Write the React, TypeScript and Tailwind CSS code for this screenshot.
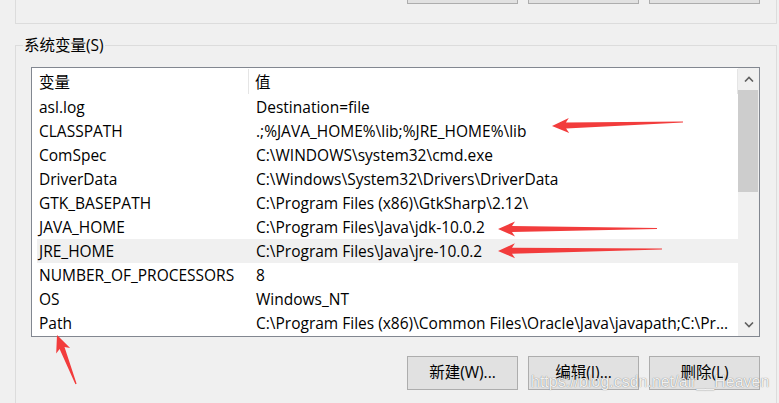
import React from 'react';

const rows: [string, string][] = [
  ['asl.log', 'Destination=file'],
  ['CLASSPATH', '.;%JAVA_HOME%\\lib;%JRE_HOME%\\lib'],
  ['ComSpec', 'C:\\WINDOWS\\system32\\cmd.exe'],
  ['DriverData', 'C:\\Windows\\System32\\Drivers\\DriverData'],
  ['GTK_BASEPATH', 'C:\\Program Files (x86)\\GtkSharp\\2.12\\'],
  ['JAVA_HOME', 'C:\\Program Files\\Java\\jdk-10.0.2'],
  ['JRE_HOME', 'C:\\Program Files\\Java\\jre-10.0.2'],
  ['NUMBER_OF_PROCESSORS', '8'],
  ['OS', 'Windows_NT'],
  ['Path', 'C:\\Program Files (x86)\\Common Files\\Oracle\\Java\\javapath;C:\\Pr...'],
];

// tapered red annotation arrow, tip -> tail
function arrowPoints(
  tip: [number, number],
  tail: [number, number],
  headLen: number,
  headHalf: number,
  shaftHalf: number
) {
  const dx = tail[0] - tip[0];
  const dy = tail[1] - tip[1];
  const len = Math.hypot(dx, dy);
  const ux = dx / len;
  const uy = dy / len;
  const nx = -uy;
  const ny = ux;
  const at = (a: number, b: number) =>
    `${(tip[0] + ux * a + nx * b).toFixed(1)},${(tip[1] + uy * a + ny * b).toFixed(1)}`;
  return [
    at(0, 0),
    at(headLen, headHalf),
    at(headLen - 3, shaftHalf),
    at(len, 0.6),
    at(len, -0.6),
    at(headLen - 3, -shaftHalf),
    at(headLen, -headHalf),
  ].join(' ');
}

function WinButton({ label }: { label: string }) {
  return (
    <div className="w-[111px] h-[34px] bg-[#e1e1e1] border border-[#adadad] flex items-center justify-center text-[15.5px] text-black">
      {label}
    </div>
  );
}

export default function App() {
  return (
    <div
      className="w-[779px] h-[403px] bg-[#f0f0f0] overflow-hidden relative text-black"
      style={{ fontFamily: '"Open Sans", "Noto Sans CJK SC", sans-serif' }}
    >
      {/* upper group (user variables), only its bottom is visible */}
      <div className="ml-[15px] w-[762px] h-[24px] flex flex-col border-x border-b border-[#dcdcdc]">
        <div className="flex justify-end gap-[10px] pr-[16px] -mt-[30px]">
          <WinButton label="" />
          <WinButton label="" />
          <WinButton label="" />
        </div>
      </div>

      {/* system variables group */}
      <div className="mt-[21px] ml-[15px] w-[762px] h-[400px] border-t border-x border-[#dcdcdc] relative pt-[21px] pl-[15px]">
        <div className="absolute -top-[11px] left-[7px] px-[1px] bg-[#f0f0f0] text-[15.5px] leading-[20px]">
          系统变量(S)
        </div>

        <div className="w-[729px] h-[270px] border border-[#828790] bg-white flex">
          <div className="flex-1 flex flex-col">
            {/* header */}
            <div className="h-[27px] flex items-center text-[15.5px]">
              <div className="w-[217px] h-[25px] pl-[7px] pt-[2px] flex items-center border-r border-[#e5e5e5]">变量</div>
              <div className="flex-1 h-[25px] pl-[6px] pt-[2px] flex items-center border-r border-[#e5e5e5]">值</div>
            </div>
            {rows.map(([k, v]) => (
              <div
                key={k}
                className={`h-[24px] ml-[5px] pt-[2px] flex items-center text-[15.5px] whitespace-nowrap ${
                  k === 'JRE_HOME' ? 'bg-[#f0f0f0]' : ''
                }`}
              >
                <div className="w-[212px] pl-[2px] overflow-hidden">{k}</div>
                <div className="flex-1 pl-[7px] overflow-hidden">{v}</div>
              </div>
            ))}
          </div>

          {/* scrollbar */}
          <div className="w-[21px] bg-[#f0f0f0] flex flex-col">
            <div className="h-[22px] flex items-center justify-center">
              <svg width="10" height="6" viewBox="0 0 10 6">
                <path d="M1 5.5 L5 1.5 L9 5.5" fill="none" stroke="#606060" strokeWidth="1.6" />
              </svg>
            </div>
            <div className="h-[102px] mr-[1px] bg-[#cdcdcd]" />
            <div className="flex-1" />
            <div className="h-[22px] flex items-center justify-center">
              <svg width="10" height="6" viewBox="0 0 10 6">
                <path d="M1 0.5 L5 4.5 L9 0.5" fill="none" stroke="#606060" strokeWidth="1.6" />
              </svg>
            </div>
          </div>
        </div>

        <div className="w-[729px] mt-[19px] flex justify-end gap-[10px]">
          <WinButton label="新建(W)..." />
          <WinButton label="编辑(I)..." />
          <WinButton label="删除(L)" />
        </div>
      </div>

      {/* watermark */}
      <div
        className="absolute left-[531px] top-[372px] text-[16px] leading-[20px] text-white/90 [text-shadow:0_0_1px_rgba(0,0,0,0.6)]"
        style={{ fontFamily: '"Liberation Sans", Arial, sans-serif' }}
      >
        https://blog.csdn.net/air__Heaven
      </div>

      {/* red annotation arrows */}
      <svg className="absolute inset-0 pointer-events-none" width="779" height="403">
        <g fill="#f23c3c">
          <polygon points={arrowPoints([552, 126], [683, 122], 17, 7.5, 3)} />
          <polygon points={arrowPoints([498, 229], [657, 228.5], 17, 7.5, 3)} />
          <polygon points={arrowPoints([498, 251], [662, 249], 17, 7.5, 3)} />
          <polygon points={arrowPoints([57, 335], [76, 384], 17, 7.5, 2.6)} />
        </g>
      </svg>
    </div>
  );
}
